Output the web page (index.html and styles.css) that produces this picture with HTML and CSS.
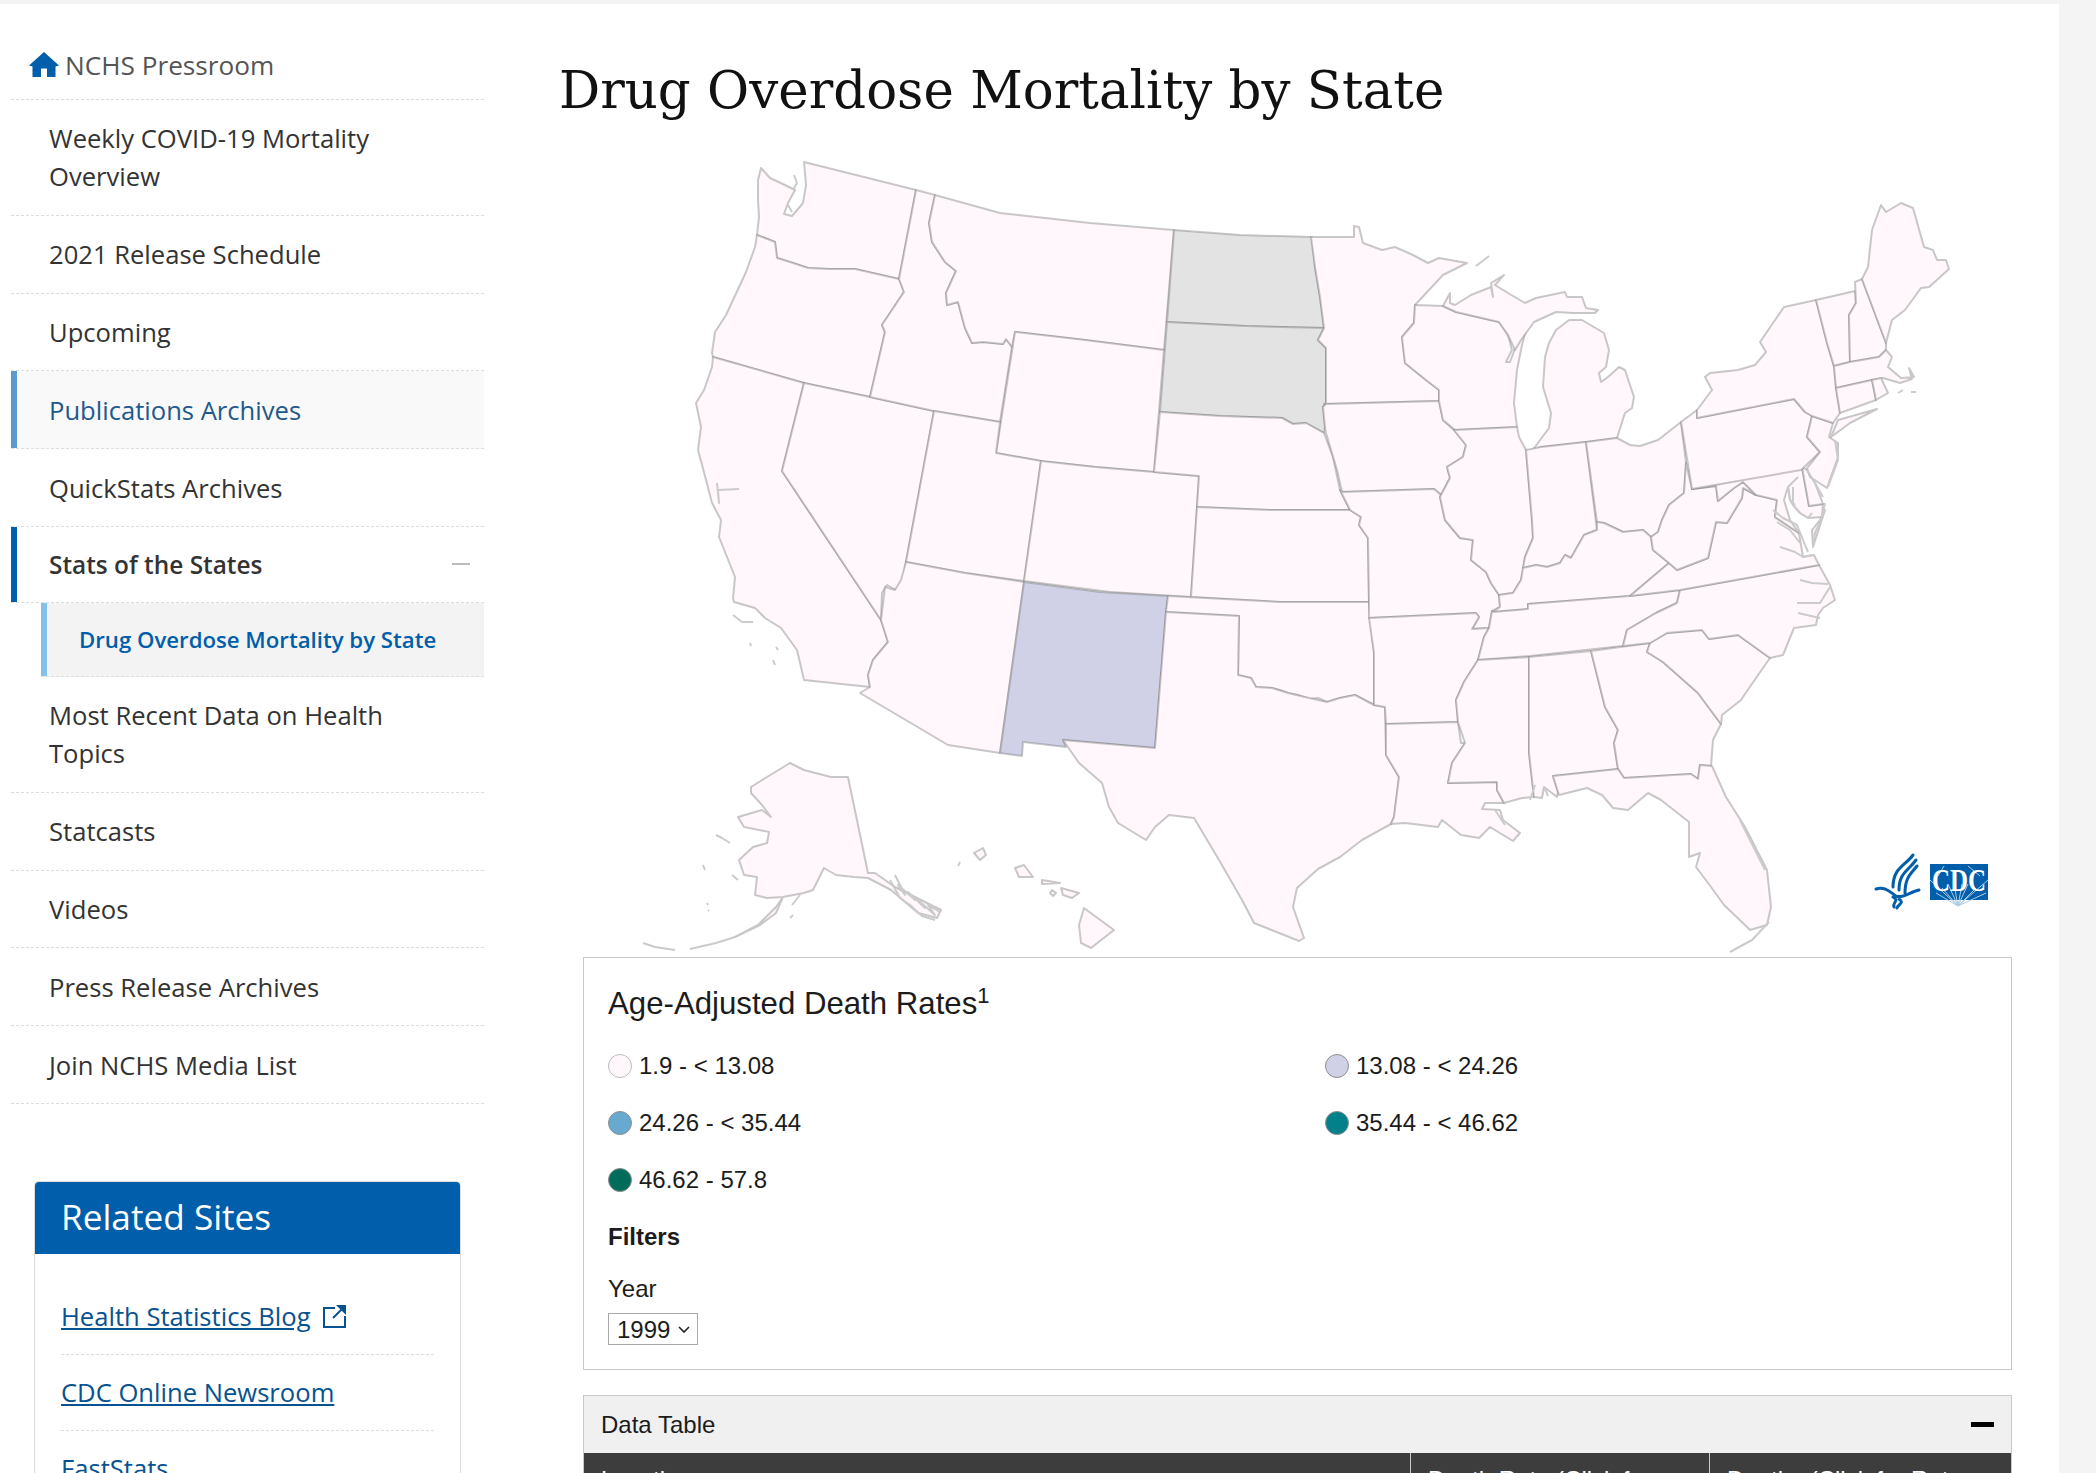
FILE: index.html
```html
<!DOCTYPE html>
<html lang="en">
<head>
  <meta charset="UTF-8">
  <title>Drug Overdose Mortality by State</title>
  <link rel="stylesheet" href="styles.css">
</head>
<body>
<div class="page">
  <aside class="sidebar">
    <ul class="side-nav">
      <li class="nav-home">
        <a href="#">
          <svg class="home-icon" viewBox="0 0 30 25"><path d="M15 0L30 13.5 26.5 14.5V25H18V16.5H12V25H3.5V14.5L0 13.5Z"/></svg>
          NCHS Pressroom
        </a>
      </li>
      <li><a href="#">Weekly COVID-19 Mortality Overview</a></li>
      <li><a href="#">2021 Release Schedule</a></li>
      <li><a href="#">Upcoming</a></li>
      <li class="nav-selected"><a href="#">Publications Archives</a></li>
      <li><a href="#">QuickStats Archives</a></li>
      <li class="nav-open"><a href="#">Stats of the States</a><span class="nav-minus"></span></li>
      <li class="nav-sub"><a href="#">Drug Overdose Mortality by State</a></li>
      <li><a href="#">Most Recent Data on Health Topics</a></li>
      <li><a href="#">Statcasts</a></li>
      <li><a href="#">Videos</a></li>
      <li><a href="#">Press Release Archives</a></li>
      <li><a href="#">Join NCHS Media List</a></li>
    </ul>

    <div class="related">
      <h3 class="related-head">Related Sites</h3>
      <ul class="related-list">
        <li>
          <a href="#">Health Statistics Blog</a>
          <svg class="ext-icon" viewBox="0 0 23 23"><path class="ext-box" d="M12 3H1v19h21V11"/><path class="ext-arrow" d="M10 13L20 3"/><path class="ext-head" d="M13 0h10v10z"/></svg>
        </li>
        <li><a href="#">CDC Online Newsroom</a></li>
        <li><a href="#">FastStats</a></li>
      </ul>
    </div>
  </aside>

  <main class="content">
    <h1 class="title">Drug Overdose Mortality by State</h1>

    <svg class="map" viewBox="620 140 1400 817">
      <g class="st">
        <path d="M761 168L770 178 785 185 795 190 788 203 784 214 792 216 803 203 806 185 804 162 860 176 916 190 899 279 855 269 829 269 808 268 793 263 777 258 775 242 757 235 759 217 758 200 758 180Z"/>
        <path d="M757 235L775 242 777 258 793 263 808 268 829 269 855 269 899 279 904 292 882 325 885 332 870 397 804 383 713 357 712 353 715 332 726 315 746 272 755 247Z"/>
        <path d="M713 357L804 383 782 471 881 620 881 620 888 642 873 660 868 675 870 687 804 680 801 667 797 650 781 628 765 618 755 608 734 602 733 598 735 577 719 537 721 520 712 503 706 480 698 450 701 427 696 403 704 390 712 367Z"/>
        <path d="M804 383L870 397 934 411 906 562 902 587 896 590 887 585 882 593 881 620 782 471Z"/>
        <path d="M916 190L935 195 929 223 932 242 945 262 956 271 946 293 947 305 958 302 965 328 972 343 983 342 1003 344 1006 339 1012 347 1000 422 934 411 870 397 885 332 882 325 904 292 899 279Z"/>
        <path d="M935 195L1000 213 1090 223 1174 230 1164 350 1085 340 1015 332 1012 347 1006 339 1003 344 983 342 972 343 965 328 958 302 947 305 946 293 956 271 945 262 932 242 929 223Z"/>
        <path d="M1015 332L1085 340 1164 350 1154 472 1095 467 1041 461 996 453Z"/>
        <path d="M934 411L1000 422 996 453 1041 461 1024 581 965 573 906 562Z"/>
        <path d="M1041 461L1095 467 1154 472 1199 476 1197 507 1191 597 1110 592 1024 581Z"/>
        <path d="M906 562L965 573 1024 582 1000 753 948 745 860 693 870 687 868 675 873 660 888 642 881 620 885 587 895 590 901 580Z"/>
        <path class="st-nodata" d="M1174 230L1240 235 1312 237 1315 267 1320 297 1324 328 1245 326 1167 322Z"/>
        <path class="st-nodata" d="M1167 322L1245 326 1324 328 1318 340 1326 348 1326 403 1323 407 1325 427 1324 433 1306 423 1293 424 1282 418 1220 416 1160 412Z"/>
        <path d="M1160 412L1220 416 1282 418 1293 424 1306 423 1324 433 1333 457 1340 490 1350 510 1270 510 1197 507 1199 476 1154 472Z"/>
        <path d="M1197 507L1270 510 1350 510 1361 517 1359 525 1368 538 1369 602 1280 602 1191 597Z"/>
        <path class="st-mid" d="M1024 582L1100 592 1168 596 1166 612 1155 748 1063 740 1066 747 1023 742 1022 756 1000 753Z"/>
        <path d="M1168 596L1280 602 1369 602 1370 618 1374 653 1374 705 1355 695 1340 698 1327 702 1318 698 1309 699 1298 695 1288 693 1280 690 1272 688 1256 687 1251 678 1238 675 1239 616 1166 612Z"/>
        <path d="M1166 612L1239 616 1238 675 1251 678 1256 687 1272 688 1288 693 1309 698 1327 702 1340 698 1355 695 1374 705 1385 707 1386 755 1399 777 1394 817 1391 824 1362 840 1340 857 1318 869 1297 888 1293 907 1304 938 1299 941 1254 923 1242 900 1219 860 1194 818 1169 815 1155 827 1146 840 1118 823 1109 807 1102 783 1079 763 1063 740 1155 748Z"/>
        <path d="M1311 237L1354 237 1354 226 1359 227 1363 243 1382 250 1395 247 1413 255 1428 263 1439 258 1467 263 1443 275 1415 305 1414 323 1402 337 1405 363 1426 380 1439 390 1439 401 1324 404 1326 403 1326 348 1318 340 1324 328 1320 297 1315 267Z"/>
        <path d="M1326 404L1439 401 1443 420 1454 430 1466 445 1463 457 1447 467 1450 478 1441 495 1434 489 1342 492 1337 470 1326 433 1325 427 1323 407Z"/>
        <path d="M1342 492L1434 489 1441 495 1440 497 1445 520 1460 538 1473 540 1471 560 1486 572 1491 583 1499 595 1500 607 1492 611 1489 628 1472 629 1479 617 1476 613 1369 618 1369 602 1368 538 1359 525 1361 517 1350 510 1340 490Z"/>
        <path d="M1369 618L1476 613 1479 617 1472 629 1489 628 1484 637 1478 660 1464 682 1456 700 1458 722 1386 724 1385 707 1374 705 1374 653Z"/>
        <path d="M1386 724L1458 722 1461 743 1465 743 1452 763 1448 783 1497 782 1497 790 1504 803 1485 803 1482 809 1500 810 1503 820 1520 833 1513 841 1490 827 1479 838 1461 835 1442 820 1438 827 1405 823 1391 824 1394 817 1399 777 1386 755Z"/>
        <path d="M1415 305L1443 306 1456 312 1499 322 1508 335 1512 350 1506 362 1510 362 1520 335 1528 322 1522 345 1517 370 1514 403 1517 427 1455 430 1443 420 1439 401 1439 390 1426 380 1405 363 1402 337 1414 323Z"/>
        <path d="M1443 306L1450 293 1450 303 1455 305 1471 295 1491 287 1493 297 1491 283 1504 275 1495 285 1508 293 1525 303 1536 298 1565 292 1567 297 1582 297 1586 308 1598 310 1595 313 1573 313 1556 312 1534 322 1521 340 1515 350 1508 335 1499 322 1456 312Z"/>
        <path d="M1532 451L1541 447 1586 442 1617 438 1625 413 1632 408 1634 397 1625 370 1619 367 1608 377 1601 382 1599 373 1606 367 1609 350 1604 333 1582 320 1569 320 1556 330 1549 343 1545 357 1543 387 1551 413 1549 428Z"/>
        <path d="M1455 430L1517 427 1519 437 1526 450 1532 520 1533 538 1525 557 1523 570 1521 580 1513 593 1499 595 1491 583 1486 572 1471 560 1473 540 1460 538 1445 520 1440 497 1441 495 1450 478 1447 467 1463 457 1466 445 1454 430Z"/>
        <path d="M1526 450L1541 447 1586 442 1596 522 1597 530 1584 535 1571 558 1565 555 1560 563 1547 567 1536 565 1523 568 1525 557 1533 538 1532 520Z"/>
        <path d="M1586 442L1617 438 1630 445 1640 446 1658 440 1681 422 1686 463 1684 493 1669 505 1662 520 1658 532 1651 537 1643 530 1623 532 1604 523 1597 522Z"/>
        <path d="M1523 568L1536 565 1547 567 1560 563 1565 555 1571 558 1584 535 1597 530 1597 522 1604 523 1623 532 1643 530 1651 537 1653 550 1669 563 1630 596 1528 604 1528 609 1493 612 1500 607 1499 595 1513 593 1521 580Z"/>
        <path d="M1493 612L1528 609 1528 604 1630 596 1680 590 1677 603 1656 613 1627 630 1623 646 1530 656 1478 660 1484 637 1489 628 1492 611Z"/>
        <path d="M1478 660L1529 657 1529 753 1534 797 1522 798 1504 803 1497 790 1497 782 1448 783 1452 763 1465 743 1458 722 1456 700 1464 682Z"/>
        <path d="M1529 657L1591 651 1605 707 1618 730 1614 743 1618 769 1553 776 1558 792 1557 797 1544 787 1542 798 1534 797 1529 753Z"/>
        <path d="M1591 651L1650 643 1647 652 1663 662 1698 693 1721 724 1713 740 1711 766 1700 765 1698 779 1691 774 1624 778 1618 769 1614 743 1618 730 1605 707Z"/>
        <path d="M1553 776L1618 769 1624 778 1691 774 1698 779 1700 765 1712 766 1726 797 1745 827 1767 870 1771 907 1767 925 1750 930 1745 925 1724 905 1711 887 1696 867 1700 853 1689 857 1689 822 1661 800 1648 793 1628 810 1613 808 1602 795 1587 788 1559 795 1558 792Z"/>
        <path d="M1650 643L1667 633 1702 630 1709 639 1738 635 1770 658 1756 678 1741 700 1722 715 1721 724 1698 693 1663 662 1647 652Z"/>
        <path d="M1680 590L1819 565 1830 585 1835 600 1823 608 1818 615 1816 625 1794 628 1783 655 1770 658 1738 635 1709 639 1702 630 1667 633 1650 643 1623 646 1627 630 1656 613 1677 603Z"/>
        <path d="M1630 596L1669 563 1677 570 1708 558 1716 522 1727 523 1742 498 1743 488 1756 495 1777 500 1775 517 1799 533 1803 557 1814 555 1819 565 1680 590Z"/>
        <path d="M1686 463L1692 489 1716 486 1718 501 1734 488 1743 482 1756 495 1743 488 1742 498 1727 523 1716 522 1708 558 1677 570 1669 563 1653 550 1651 537 1658 532 1662 520 1669 505 1684 493Z"/>
        <path d="M1692 489L1802 467 1809 506 1823 504 1822 517 1808 518 1800 513 1793 505 1790 500 1788 487 1784 500 1790 520 1799 533 1775 517 1777 500 1756 495 1743 482 1734 488 1718 501 1716 486Z"/>
        <path d="M1802 467L1807 470 1815 483 1823 504 1809 506Z"/>
        <path d="M1825 510L1813 547 1812 530 1820 520Z"/>
        <path d="M1697 418L1794 399 1805 412 1812 416 1807 437 1820 452 1801 470 1692 489 1681 422 1697 410Z"/>
        <path d="M1812 416L1833 423 1829 437 1838 443 1838 457 1827 488 1810 477 1807 468 1820 452 1807 437Z"/>
        <path d="M1697 410L1712 390 1705 377 1710 373 1738 370 1755 365 1766 352 1760 342 1784 307 1816 300 1827 343 1834 367 1836 388 1840 413 1833 423 1812 416 1805 412 1794 399 1697 418Z"/>
        <path d="M1838 420L1877 409 1850 423 1831 437Z"/>
        <path d="M1816 300L1855 291 1856 303 1849 315 1850 362 1834 366 1827 343Z"/>
        <path d="M1855 282L1862 279 1886 343 1886 350 1879 357 1850 362 1849 315 1856 303Z"/>
        <path d="M1862 279L1868 267 1872 230 1881 205 1886 212 1901 203 1913 208 1924 247 1933 250 1937 260 1946 260 1949 269 1938 279 1929 287 1921 288 1916 295 1905 310 1892 320 1886 343Z"/>
        <path d="M1834 366L1850 362 1879 357 1886 350 1892 357 1888 367 1901 378 1914 377 1909 368 1912 379 1900 383 1883 378 1872 380 1836 388Z"/>
        <path d="M1836 388L1872 380 1876 400 1840 413Z"/>
        <path d="M1872 380L1881 378 1888 393 1876 400Z"/>
        <path d="M848 777L868 873 875 873 895 887 941 910 937 918 918 913 891 890 868 878 854 877 836 875 824 868 813 890 804 893 783 897 776 907 758 925 735 937 760 925 776 913 783 897 767 898 755 895 757 877 744 875 739 860 753 847 767 843 769 832 744 827 738 817 762 810 771 817 762 805 751 793 751 787 767 777 790 763 804 770 831 777Z"/>
        <path d="M1084 908L1114 930 1091 948 1081 943 1079 925Z"/>
        <path d="M1061 888L1079 893 1072 898 1063 895Z"/>
        <path d="M1042 880L1060 883 1042 884Z"/>
        <path d="M1052 890L1056 893 1053 896 1050 893Z"/>
        <path d="M1015 868L1024 865 1033 877 1019 877Z"/>
        <path d="M974 853L983 848 986 855 980 860Z"/>
      </g>

      <g class="coast">
        <path d="M794 175L797 183 793 190M788 205L792 212"/>
        <path d="M717 483L719 503 718 490 739 489"/>
        <path d="M733 615L742 622 753 622M750 643L751 646M776 647L778 650M773 660L775 665"/>
        <path d="M1476 266L1489 256"/>
        <path d="M1898 393L1903 390M1911 392L1916 392"/>
        <path d="M1769 922L1752 940 1730 952"/>
        <path d="M1740 820L1750 840 1765 870"/>
        <!-- chesapeake and the carolina sounds -->
        <path d="M1798 477L1788 487 1790 500 1795 505M1793 487L1793 505 1800 513 1808 518 1812 513"/>
        <path d="M1773 510L1783 518 1797 525 1803 540 1808 552M1777 522L1790 530 1800 543M1780 547L1795 552 1803 557 1812 555"/>
        <path d="M1807 470L1815 483 1823 497M1825 503L1822 517 1815 533 1813 547M1835 440L1838 460 1828 487"/>
        <path d="M1800 580L1812 583 1828 584M1797 603L1820 603 1830 587M1798 613L1820 618"/>
        <path d="M643 943L655 947 675 950 M690 949L716 943 735 937"/>
        <path d="M716 835L722 838 730 843M703 865L705 870M732 875L738 880M707 903L708 905M708 910L709 911"/>
        <!-- alaska panhandle -->
        <path d="M895 875L905 895 898 885 915 900 908 892 925 908 918 900 935 915 928 905 940 912M890 880L900 898 910 905 922 916 935 920"/>
        <path d="M792 905L800 895M790 918L793 915"/>
        <path d="M960 862L958 866"/>
        <path d="M1495 810L1505 825M1530 800L1535 785M1544 787L1548 796"/>
      </g>

      <g class="logo">
        <path d="M1913 855C1905 866 1893 868 1893 887M1916 860C1908 871 1899 873 1899 890M1917 866C1911 874 1905 877 1905 893"/>
        <path d="M1876 889C1885 886 1890 892 1896 896 1902 899 1910 892 1919 890M1893 897C1900 901 1892 902 1894 907M1899 899C1905 903 1898 904 1897 908"/>
        <rect class="logo-box" x="1930" y="864" width="58" height="36"/>
        <path class="logo-rays" d="M1958 906L1936 893M1958 906L1942 888M1958 906L1948 884M1958 906L1954 884M1958 906L1962 884M1958 906L1968 884M1958 906L1976 888M1958 906L1986 893M1958 906L1988 880M1958 906L1930 880M1968 866L1980 876M1944 866L1938 876"/>
        <text class="logo-text" x="1932" y="891" textLength="54" lengthAdjust="spacingAndGlyphs">CDC</text>
      </g>
    </svg>

    <section class="legend-box">
      <h4 class="legend-title">Age-Adjusted Death Rates<sup>1</sup></h4>
      <div class="legend-grid">
        <div class="legend-item"><span class="dot dot-1"></span>1.9 - &lt; 13.08</div>
        <div class="legend-item"><span class="dot dot-2"></span>13.08 - &lt; 24.26</div>
        <div class="legend-item"><span class="dot dot-3"></span>24.26 - &lt; 35.44</div>
        <div class="legend-item"><span class="dot dot-4"></span>35.44 - &lt; 46.62</div>
        <div class="legend-item"><span class="dot dot-5"></span>46.62 - 57.8</div>
      </div>
      <div class="filters-label">Filters</div>
      <label class="year-label" for="year">Year</label>
      <div class="year-wrap">
        <select class="year-select" id="year">
          <option>1999</option>
          <option>2000</option>
          <option>2001</option>
        </select>
        <svg class="year-chevron" viewBox="0 0 12 7"><path d="M1 1l5 5 5-5"/></svg>
      </div>
    </section>

    <section class="table-box">
      <div class="table-head">
        <span>Data Table</span>
        <span class="table-minus"></span>
      </div>
      <div class="table-cols">
        <div>Location</div>
        <div>Death Rate (Click for Rate Sort)</div>
        <div>Deaths (Click for Rate Sort)</div>
      </div>
    </section>
  </main>
</div>
</body>
</html>
```

FILE: styles.css
```css
html, body {
  height: 1473px;
  overflow: hidden;
}
body {
  margin: 0;
  padding-top: 4px;
  box-sizing: border-box;
  background-color: #f4f4f4;
  font-family: "Liberation Sans", Arial, sans-serif;
  color: #1c1c1c;
}
ul {
  list-style: none;
  margin: 0;
  padding: 0;
}
.page {
  display: flex;
  width: 2059px;
  height: 1469px;
  background-color: #fff;
}

/* left nav */
.sidebar {
  width: 473px;
  margin-left: 11px;
  flex-shrink: 0;
  font-family: "Open Sans", sans-serif;
}
.side-nav {
  font-size: 25.6px;
  line-height: 38px;
}
.side-nav li {
  position: relative;
  border-bottom: 1px dashed #ddd;
}
.side-nav a {
  display: block;
  padding: 20.4px 60px 18.4px 38px;
  color: #333;
  text-decoration: none;
}
.nav-home a {
  display: flex;
  align-items: center;
  gap: 6px;
  height: 95px;
  box-sizing: border-box;
  padding: 26px 0 0 18px;
  color: #555;
  font-size: 26.2px;
}
.home-icon {
  width: 30px;
  height: 25px;
  fill: #005eaa;
}
.side-nav .nav-selected {
  background-color: #f9f9f9;
  box-shadow: inset 6px 0 0 #5b9bd0;
}
.nav-selected a {
  color: #1f5a8c;
}
.side-nav .nav-open {
  box-shadow: inset 6px 0 0 #005eaa;
}
.side-nav .nav-open a {
  padding-top: 18.6px;
  padding-bottom: 18.6px;
  font-size: 24.4px;
  font-weight: 600;
  color: #333;
}
.nav-minus {
  position: absolute;
  right: 14px;
  top: 36px;
  width: 18px;
  height: 2px;
  background-color: #bbb;
}
.side-nav .nav-sub {
  margin-left: 30px;
  background-color: #f3f3f3;
  box-shadow: inset 6px 0 0 #84c1ea;
  font-size: 22.2px;
}
.side-nav .nav-sub a {
  padding: 17.5px 0 17.5px 38px;
  font-weight: 600;
  color: #005eaa;
}

.related {
  margin: 77px 23px 0;
  border: 1px solid #ddd;
  border-bottom: 0;
  border-radius: 5px 5px 0 0;
}
.related-head {
  margin: 0;
  height: 72px;
  padding-left: 26px;
  background-color: #005eaa;
  border-radius: 4px 4px 0 0;
  color: #fff;
  font-size: 35.2px;
  font-weight: 400;
  line-height: 69px;
}
.related-list {
  margin: 25px 26px 0;
  font-size: 25.6px;
  line-height: 38px;
}
.related-list li {
  display: flex;
  align-items: center;
  height: 75px;
  border-bottom: 1px dashed #ddd;
}
.related-list a {
  color: #075290;
}
.ext-icon {
  width: 23px;
  height: 23px;
  margin-left: 12px;
  fill: none;
  stroke: #075290;
  stroke-width: 2;
}
.ext-icon .ext-head {
  fill: #075290;
  stroke: none;
}

/* main column */
.content {
  margin-left: 75px;
  flex: 1;
  min-width: 0;
}
.title {
  margin: 0;
  height: 136px;
  padding-top: 55px;
  box-sizing: border-box;
  font-family: "DejaVu Serif", serif;
  font-size: 51.4px;
  font-weight: 400;
  line-height: 62px;
  color: #111;
  white-space: nowrap;
}
.map {
  display: block;
  width: 1400px;
  height: 817px;
  margin-left: 61px;
}
.st path {
  fill: #fff7fb;
  stroke: #777;
  stroke-opacity: 0.4;
  stroke-width: 2;
  stroke-linejoin: round;
}
.st .st-nodata {
  fill: #e3e3e3;
}
.st .st-mid {
  fill: #d0d1e6;
}
.coast path {
  fill: none;
  stroke: #cbcbcb;
  stroke-width: 2;
  stroke-linejoin: round;
}
.logo path {
  fill: none;
  stroke: #005eaa;
  stroke-width: 3;
  stroke-linecap: round;
}
.logo-box {
  fill: #005eaa;
}
.logo .logo-rays {
  stroke: #a9cbe8;
  stroke-width: 1;
  stroke-linecap: butt;
}
.logo-text {
  fill: #fff;
  font-family: "Liberation Serif", serif;
  font-size: 31px;
  font-weight: 700;
}

.legend-box {
  margin-left: 24px;
  width: 1429px;
  height: 413px;
  box-sizing: border-box;
  padding: 24px 24px 0;
  border: 1px solid #c8c8c8;
  font-size: 24px;
}
.legend-title {
  margin: 0 0 11px;
  font-size: 31.2px;
  font-weight: 400;
  line-height: 44px;
}
.legend-title sup {
  font-size: 22px;
  line-height: 0;
}
.legend-grid {
  display: grid;
  grid-template-columns: 717px 1fr;
  grid-auto-rows: 57px;
}
.legend-item {
  display: flex;
  align-items: center;
  gap: 7px;
}
.dot {
  width: 24px;
  height: 24px;
  box-sizing: border-box;
  border: 1px solid #8f8f8f;
  border-radius: 50%;
}
.dot-1 { background-color: #fff7fb; border-color: #bbb; }
.dot-2 { background-color: #d0d1e6; }
.dot-3 { background-color: #67a9cf; }
.dot-4 { background-color: #02818a; }
.dot-5 { background-color: #016c59; }
.filters-label {
  margin-top: 14px;
  font-weight: 700;
  line-height: 30px;
}
.year-label {
  display: block;
  margin-top: 22px;
  line-height: 30px;
}
.year-wrap {
  position: relative;
  width: 90px;
  margin-top: 9px;
}
.year-select {
  display: block;
  width: 90px;
  height: 32px;
  padding: 0 0 0 8px;
  border: 1px solid #aaa;
  border-radius: 0;
  background-color: #fff;
  font-family: inherit;
  font-size: 24px;
  color: #1c1c1c;
  appearance: none;
}
.year-chevron {
  position: absolute;
  right: 8px;
  top: 13px;
  width: 12px;
  height: 7px;
  fill: none;
  stroke: #222;
  stroke-width: 1.6;
}

.table-box {
  margin: 25px 0 0 24px;
  width: 1429px;
  box-sizing: border-box;
  border: 1px solid #c8c8c8;
  border-bottom: 0;
}
.table-head {
  display: flex;
  align-items: center;
  justify-content: space-between;
  height: 57px;
  padding: 0 17px;
  background-color: #f0f0f0;
  font-size: 24px;
}
.table-minus {
  width: 23px;
  height: 5px;
  background-color: #000;
}
.table-cols {
  display: grid;
  grid-template-columns: 827px 299px 1fr;
  height: 120px;
  background-color: #3d3d3d;
  color: #fff;
  font-size: 24px;
}
.table-cols div {
  padding: 13px 17px;
  border-right: 1px solid #ccc;
}
.table-cols div:last-child {
  border-right: 0;
}
```
